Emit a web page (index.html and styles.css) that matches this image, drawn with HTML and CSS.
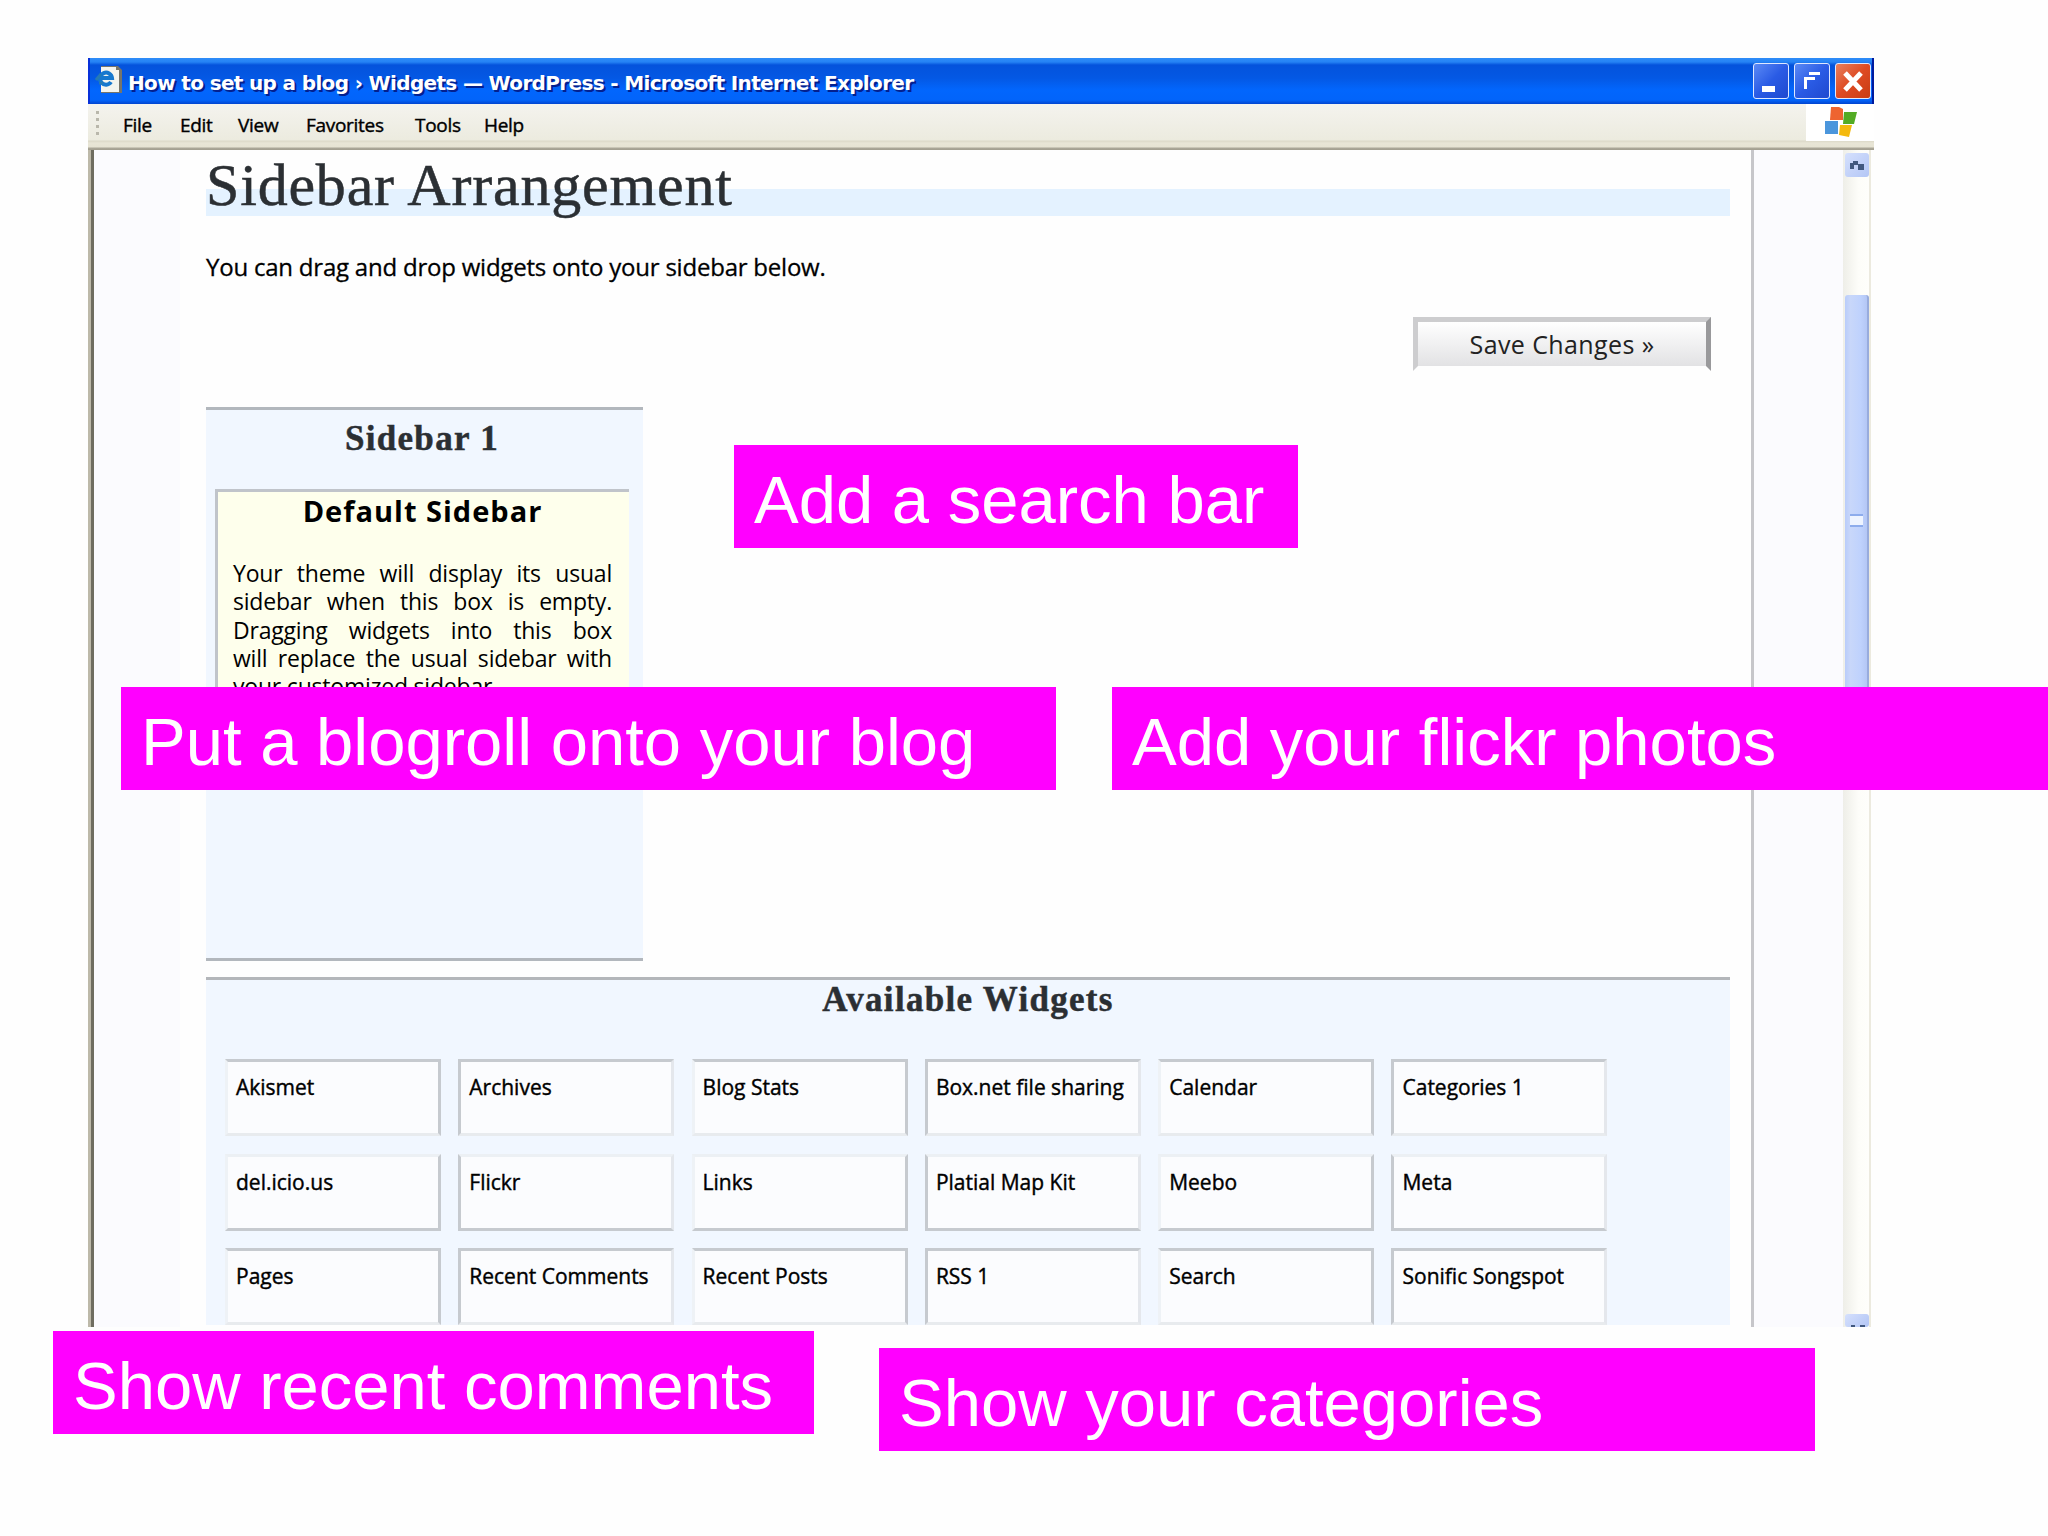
FILE: index.html
```
<!DOCTYPE html>
<html lang="en">
<head>
    <meta charset="UTF-8">
    <meta name="viewport" content="width=device-width, initial-scale=1.0">
    <title>How to set up a blog - Widgets</title>
    <link rel="stylesheet" href="styles.css">
</head>
<body>
    <div class="window">
        <!-- Title bar -->
        <div class="titlebar">
            <svg class="ie-icon" width="28" height="30" viewBox="0 0 28 30">
                <path d="M6 1h17l4 4v23H6z" fill="#77756a"/>
                <path d="M6 2h15v3h3v22H6z" fill="#f4f4ee"/>
                <path d="M16 17a6 6 0 1 1 1-4H6" fill="none" stroke="#1678cf" stroke-width="4"/>
                <path d="M1 15l5-6M4 18h4" stroke="#257ab5" stroke-width="3"/>
            </svg>
            <span class="title">How to set up a blog › Widgets — WordPress - Microsoft Internet Explorer</span>
            <div class="controls">
                <span class="control"><svg width="34" height="35" viewBox="0 0 34 35"><path d="M8 22h13v6H8z" fill="#fff"/></svg></span>
                <span class="control"><svg width="34" height="35" viewBox="0 0 34 35"><path d="M14 8h11v3H14zM9 13h11v3h-8v9H9z" fill="#fff"/></svg></span>
                <span class="control close"><svg width="34" height="35" viewBox="0 0 34 35"><path d="M9 9l16 17M25 9L9 26" stroke="#fff" stroke-width="5"/></svg></span>
            </div>
        </div>

        <!-- Menu bar -->
        <div class="menubar">
            <span class="grip"></span>
            <span class="menu-file">File</span>
            <span class="menu-edit">Edit</span>
            <span class="menu-view">View</span>
            <span class="menu-favorites">Favorites</span>
            <span class="menu-tools">Tools</span>
            <span class="menu-help">Help</span>
            <div class="flag">
                <svg width="34" height="34" viewBox="0 0 34 34">
                    <path d="M7 1h8l4 2v11H6z" fill="#ee6430"/>
                    <path d="M20 6h13l-3 12H19z" fill="#53ab24"/>
                    <path d="M1 15h13v13H1z" fill="#4b96dc"/>
                    <path d="M16 19h12l-3 12-10-2z" fill="#f4b90d"/>
                </svg>
            </div>
        </div>

        <div class="viewport">
            <div class="gutter-left"></div>
            <div class="page">
                <h2>Sidebar Arrangement</h2>
                <p class="intro">You can drag and drop widgets onto your sidebar below.</p>
                <button class="save">Save Changes »</button>

                <div class="sidebar">
                    <h3>Sidebar 1</h3>
                    <div class="default-box">
                        <h4>Default Sidebar</h4>
                        <p>
                            <span>Your theme will display its usual</span>
                            <span>sidebar when this box is empty.</span>
                            <span>Dragging widgets into this box</span>
                            <span>will replace the usual sidebar with</span>
                            your customized sidebar.
                        </p>
                    </div>
                </div>

                <div class="available">
                    <h3>Available Widgets</h3>
                    <div class="widgets">
                        <div class="widget">Akismet</div>
                        <div class="widget">Archives</div>
                        <div class="widget">Blog Stats</div>
                        <div class="widget">Box.net file sharing</div>
                        <div class="widget">Calendar</div>
                        <div class="widget">Categories 1</div>
                        <div class="widget">del.icio.us</div>
                        <div class="widget">Flickr</div>
                        <div class="widget">Links</div>
                        <div class="widget">Platial Map Kit</div>
                        <div class="widget">Meebo</div>
                        <div class="widget">Meta</div>
                        <div class="widget">Pages</div>
                        <div class="widget">Recent Comments</div>
                        <div class="widget">Recent Posts</div>
                        <div class="widget">RSS 1</div>
                        <div class="widget">Search</div>
                        <div class="widget">Sonific Songspot</div>
                    </div>
                </div>
            </div>
            <div class="gutter-right"></div>
            <div class="scrollbar">
                <div class="arrow up"><svg width="26" height="24" viewBox="0 0 26 24"><path d="M5 10h3V8h5v4H9v4H5zM13 11h6v6h-6z" fill="#41587f"/></svg></div>
                <div class="thumb"><span></span></div>
                <div class="arrow down"><svg width="26" height="13" viewBox="0 0 26 13"><path d="M6 11h4v2H6zM15 11h5v2h-5z" fill="#41587f"/></svg></div>
            </div>
        </div>
    </div>

    <!-- Callouts on top of the window -->
    <div class="callout search">Add a search bar</div>
    <div class="callout blogroll">Put a blogroll onto your blog</div>
    <div class="callout flickr">Add your flickr photos</div>
    <div class="callout comments">Show recent comments</div>
    <div class="callout categories">Show your categories</div>
</body>
</html>
```
FILE: styles.css
```
* {
    margin: 0;
    padding: 0;
    box-sizing: border-box;
}

body {
    position: relative;
    width: 2048px;
    height: 1536px;
    padding: 58px 0 0 88px;
    overflow: hidden;
    background: #fefefe;
    font-family: "Open Sans", "Noto Sans", sans-serif;
    color: #000;
}

.window {
    width: 1786px;
    height: 1269px;
    display: flex;
    flex-direction: column;
}

/* Title bar */
.titlebar {
    flex: none;
    height: 46px;
    display: flex;
    align-items: center;
    padding: 0 1px 0 5px;
    background: linear-gradient(#2f8cf8 0, #2583f5 4px, #0453dc 7px, #0458e4 20px, #0266fd 32px, #0264fa 42px, #0144cf 46px);
    border-left: 2px solid #0831d9;
    border-right: 2px solid #001a9e;
}

.ie-icon {
    margin-top: -2px;
}

.title {
    margin-left: 5px;
    padding-top: 3px;
    font-family: "DejaVu Sans", sans-serif;
    font-size: 20px;
    font-weight: bold;
    line-height: 46px;
    letter-spacing: -0.65px;
    white-space: nowrap;
    color: #fff;
    text-shadow: 2px 2px 0 #03208f;
}

.controls {
    display: flex;
    gap: 5px;
    margin-left: auto;
}

.control {
    width: 36px;
    height: 36px;
    border: 1px solid #dfe8ff;
    border-radius: 3px;
    background: linear-gradient(135deg, #5b8af5, #2a5be5 50%, #1f49cf);
}

.control.close {
    background: linear-gradient(135deg, #e8805f, #de4a22 50%, #c83c14);
}

.control svg {
    display: block;
}

/* Menu bar */
.menubar {
    flex: none;
    height: 46px;
    display: flex;
    padding-left: 8px;
    background: linear-gradient(#f4f3ee 0, #ecebdf 36px, #dcd9c8 37px, #e8e5d6 39px, #e6e3d3 43px, #aca899 44px, #a19d8e 46px);
    font-size: 19px;
    line-height: 42px;
    letter-spacing: -0.3px;
    -webkit-text-stroke: 0.4px #000;
}

.grip {
    width: 3px;
    height: 26px;
    margin: 7px 24px 0 0;
    background: repeating-linear-gradient(#b9b7ab 0 3px, transparent 3px 7px);
}

.menu-file { width: 57px; }
.menu-edit { width: 58px; }
.menu-view { width: 68px; }
.menu-favorites { width: 109px; }
.menu-tools { width: 69px; }

.flag {
    width: 68px;
    height: 37px;
    margin-left: auto;
    padding: 2px 0 0 18px;
    background: #fff;
}

.flag svg {
    display: block;
}

/* Browser viewport */
.viewport {
    flex: 1;
    min-height: 0;
    display: flex;
    overflow: hidden;
    border-left: 3px solid #bdb9a9;
}

.gutter-left {
    width: 89px;
    border-left: 3px solid #6f6d60;
    background: #fbfbfe;
}

.page {
    width: 1574px;
    padding: 0 21px 0 26px;
    background: #fefefe;
    border-right: 3px solid #c6c6ca;
}

.gutter-right {
    width: 89px;
    background: #fbfbfe;
}

h2 {
    height: 66px;
    background: linear-gradient(transparent 39px, #e4f2ff 39px);
    font-family: "Liberation Serif", serif;
    font-size: 60px;
    font-weight: normal;
    line-height: 70px;
    letter-spacing: 0.8px;
    color: #2b2f33;
    -webkit-text-stroke: 0.5px #2b2f33;
}

.intro {
    margin-top: 33px;
    font-size: 24px;
    line-height: 36px;
    letter-spacing: -0.22px;
    white-space: nowrap;
    -webkit-text-stroke: 0.3px #000;
}

.save {
    display: block;
    width: 298px;
    height: 54px;
    margin: 32px 19px 0 auto;
    padding-top: 0;
    border: 5px solid #cdcdcf;
    border-right-color: #99999b;
    border-bottom-color: transparent;
    background: linear-gradient(#fff, #e2e2e4) padding-box;
    font-family: "Open Sans", sans-serif;
    font-size: 25px;
    line-height: 34px;
    letter-spacing: 0.4px;
    color: #222;
}

.sidebar {
    width: 437px;
    height: 554px;
    margin-top: 36px;
    padding: 0 14px 0 9px;
    border-top: 3px solid #b2b7bd;
    border-bottom: 3px solid #b2b7bd;
    background: #f1f7ff;
}

h3 {
    font-family: "Liberation Serif", serif;
    font-size: 35px;
    line-height: 40px;
    letter-spacing: 1.3px;
    text-align: center;
    color: #2b2f33;
    -webkit-text-stroke: 0.5px #2b2f33;
}

.sidebar h3 {
    height: 79px;
    padding-top: 9px;
}

.default-box {
    height: 240px;
    padding: 0 17px 0 15px;
    border-top: 3px solid #c0c4ca;
    border-left: 3px solid #c0c4ca;
    background: #feffec;
}

.default-box h4 {
    height: 67px;
    padding-top: 1px;
    font-size: 29px;
    line-height: 36px;
    letter-spacing: 1px;
    text-align: center;
}

.default-box p {
    font-size: 23px;
    line-height: 28.3px;
    letter-spacing: -0.2px;
    white-space: nowrap;
}

.default-box p span {
    display: block;
    text-align-last: justify;
}

/* Widget palette */
.available {
    height: 348px;
    margin-top: 16px;
    border-top: 3px solid #b3b6ba;
    background: #f1f7ff;
}

.available h3 {
    height: 79px;
}

.widgets {
    display: grid;
    grid-template-columns: repeat(6, 216px);
    grid-auto-rows: 77px;
    gap: 17.5px 17.3px;
    padding-left: 19px;
}

.widget {
    padding: 9px 0 0 8px;
    border: 3px solid #c6cacf;
    background: #fbfcfe;
    font-size: 21px;
    line-height: 32px;
    white-space: nowrap;
    -webkit-text-stroke: 0.4px #000;
}

.widget:nth-child(odd) {
    border-left-color: #eef2f6;
}

.widget:nth-child(even) {
    border-right-color: #e4e7ec;
}

.widget:nth-child(-n+6),
.widget:nth-child(n+13) {
    border-bottom-color: #e8ebee;
}

.widget:nth-child(n+7):nth-child(-n+12) {
    border-top-color: #ecf0f4;
}

/* Scrollbar */
.scrollbar {
    width: 28px;
    display: flex;
    flex-direction: column;
    background: linear-gradient(90deg, #eeeee8, #fdfdf9 60%, #fefefb);
    border-right: 2px solid #eceadf;
}

.arrow {
    height: 24px;
    margin: 3px 0 0 2px;
    border-radius: 3px;
    background: linear-gradient(135deg, #d5e0fd, #b3c6f5);
}

.arrow svg {
    display: block;
}

.thumb {
    height: 450px;
    margin: 118px 0 0 2px;
    padding: 219px 0 0 5px;
    border-right: 2px solid #98acdd;
    border-radius: 3px;
    background: linear-gradient(90deg, #b9ccfa, #c8d7fa 25%, #bfd2fd 70%, #b4c7f5);
}

.thumb span {
    display: block;
    width: 13px;
    height: 13px;
    border-top: 2px solid #8dacec;
    border-bottom: 2px solid #8dacec;
    background: #eef4ff;
}

.arrow.down {
    height: 13px;
    margin-top: auto;
}

/* Callouts */
.callout {
    position: absolute;
    height: 103px;
    padding-left: 20px;
    background: #ff00ff;
    font-family: "Liberation Sans", Arial, sans-serif;
    font-size: 67px;
    line-height: 110px;
    white-space: nowrap;
    color: #fff;
}

.search {
    left: 734px;
    top: 445px;
    width: 564px;
}

.blogroll {
    left: 121px;
    top: 687px;
    width: 935px;
}

.flickr {
    left: 1112px;
    top: 687px;
    width: 936px;
}

.comments {
    left: 53px;
    top: 1331px;
    width: 761px;
}

.categories {
    left: 879px;
    top: 1348px;
    width: 936px;
}
```
